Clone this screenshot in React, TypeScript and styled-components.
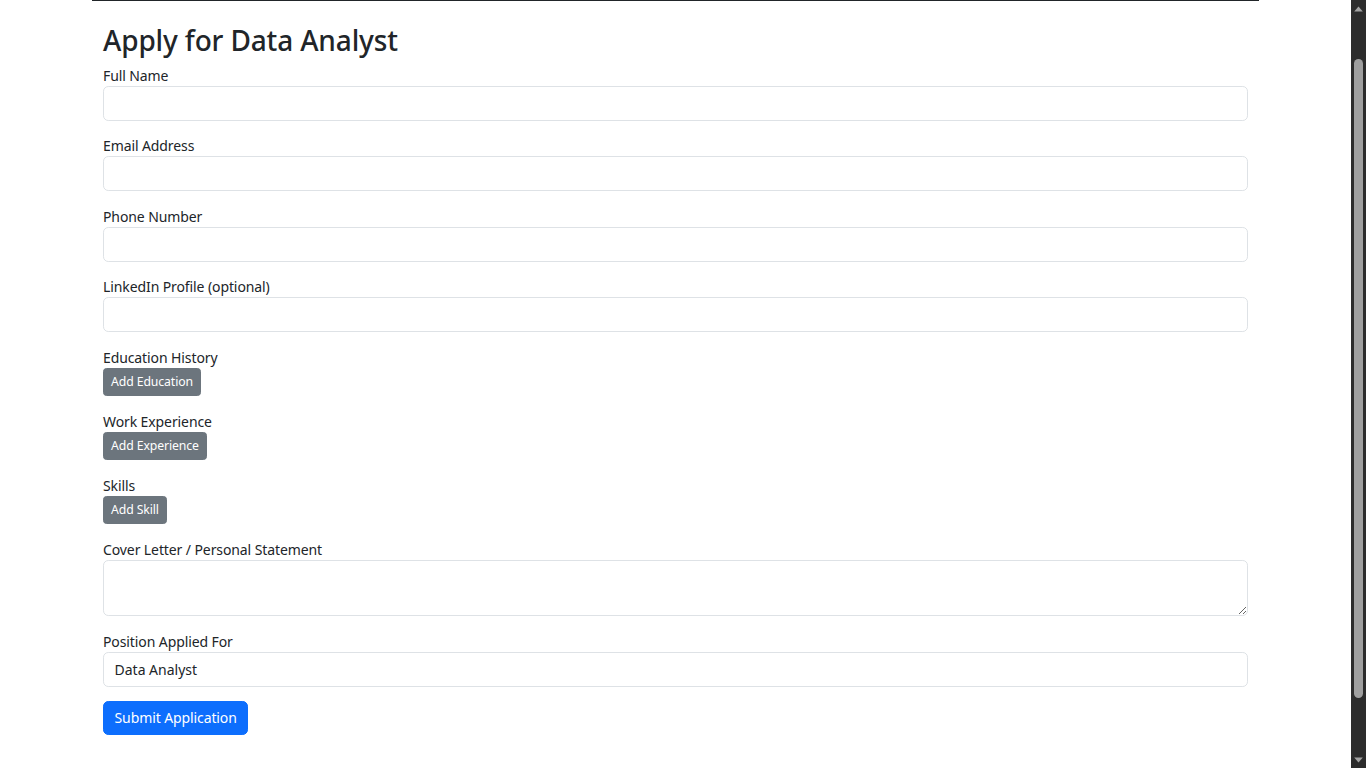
import React, {useState} from 'react';
import styled, {createGlobalStyle} from 'styled-components';

const GlobalStyle = createGlobalStyle`
  html, body {
    margin: 0;
    padding: 0;
    overflow: hidden;
    background: #ffffff;
  }
  body {
    font-family: 'Segoe UI', 'Noto Sans', 'Open Sans', sans-serif;
    font-size: 14px;
    line-height: 1.5;
    color: #212529;
  }
  *, *::before, *::after {
    box-sizing: border-box;
  }
`;

const textFields = [
  {id: 'fullName', label: 'Full Name', type: 'text'},
  {id: 'email', label: 'Email Address', type: 'email'},
  {id: 'phone', label: 'Phone Number', type: 'tel'},
  {id: 'linkedin', label: 'LinkedIn Profile (optional)', type: 'url'},
];

const listFields = [
  {id: 'education', label: 'Education History', button: 'Add Education'},
  {id: 'experience', label: 'Work Experience', button: 'Add Experience'},
  {id: 'skills', label: 'Skills', button: 'Add Skill'},
];

const App = () => {
  const [position, setPosition] = useState('Data Analyst');

  return (
    <>
      <GlobalStyle />
      <StShell>
        <StPage>
          <StContainer>
            <StTitle>Apply for Data Analyst</StTitle>
            <form onSubmit={e => e.preventDefault()}>
              {textFields.map(field => (
                <StField key={field.id} $gap={14.5}>
                  <StLabel htmlFor={field.id}>{field.label}</StLabel>
                  <StInput id={field.id} type={field.type} />
                </StField>
              ))}

              {listFields.map(field => (
                <StField key={field.id} $gap={15}>
                  <StLabel>{field.label}</StLabel>
                  <StSmallButton type="button">{field.button}</StSmallButton>
                </StField>
              ))}

              <StField $gap={15}>
                <StLabel htmlFor="coverLetter">Cover Letter / Personal Statement</StLabel>
                <StTextArea id="coverLetter" rows={2} />
              </StField>

              <StField $gap={14}>
                <StLabel htmlFor="position">Position Applied For</StLabel>
                <StInput id="position" type="text" value={position} onChange={e => setPosition(e.target.value)} />
              </StField>

              <StSubmitButton type="submit">Submit Application</StSubmitButton>
            </form>
          </StContainer>
        </StPage>

        {/* 브라우저 스크롤바 모양 */}
        <StScrollbar>
          <StArrow>
            <svg width="9" height="6" viewBox="0 0 9 6">
              <path d="M4.5 0.5 L8.8 5.5 L0.2 5.5 Z" fill="#a3a3a3" />
            </svg>
          </StArrow>
          <StTrack>
            <StThumb />
          </StTrack>
          <StArrow>
            <svg width="9" height="6" viewBox="0 0 9 6">
              <path d="M0.2 0.5 L8.8 0.5 L4.5 5.5 Z" fill="#a3a3a3" />
            </svg>
          </StArrow>
        </StScrollbar>
      </StShell>
    </>
  );
};

const StShell = styled.div`
  display: flex;
  width: 100vw;
  height: 100vh;
`;
const StPage = styled.main`
  flex: 1;
  overflow: hidden;
`;
const StContainer = styled.div`
  width: 1167px;
  margin: 0 auto;
  padding: 0 11px;
  border-top: 1px solid #212529;
`;
const StTitle = styled.h2`
  margin: 23px 0 7px;
  font-size: 28px;
  font-weight: 500;
  line-height: 1.2;
  letter-spacing: -0.15px;
`;
const StField = styled.div<{$gap: number}>`
  margin-bottom: ${p => p.$gap}px;
`;
const StLabel = styled.label`
  display: block;
  font-size: 14px;
  line-height: 21px;
  letter-spacing: -0.1px;
`;
const StInput = styled.input`
  display: block;
  width: 100%;
  height: 35px;
  padding: 6px 10.5px;
  font-family: inherit;
  font-size: 14px;
  line-height: 21px;
  color: #212529;
  background: #ffffff;
  border: 1px solid #dee2e6;
  border-radius: 5.25px;
  outline: none;
`;
const StTextArea = styled.textarea`
  display: block;
  width: 100%;
  height: 56px;
  padding: 6px 10.5px;
  font-family: inherit;
  font-size: 14px;
  line-height: 21px;
  color: #212529;
  border: 1px solid #dee2e6;
  border-radius: 5.25px;
  resize: vertical;
  outline: none;
`;
const StSmallButton = styled.button`
  display: block;
  height: 28px;
  padding: 0 7px;
  font-family: inherit;
  font-size: 12.25px;
  line-height: 18px;
  letter-spacing: -0.1px;
  color: #ffffff;
  background: #6c757d;
  border: 1px solid #6c757d;
  border-radius: 3.5px;
  cursor: pointer;
`;
const StSubmitButton = styled.button`
  display: block;
  height: 34px;
  margin-top: 1px;
  padding: 0 10.5px;
  font-family: inherit;
  font-size: 14px;
  line-height: 21px;
  letter-spacing: -0.1px;
  color: #ffffff;
  background: #0d6efd;
  border: 1px solid #0d6efd;
  border-radius: 5.25px;
  cursor: pointer;
`;
const StScrollbar = styled.div`
  display: flex;
  flex-direction: column;
  width: 15px;
  height: 100%;
  background: #2c2c2c;
`;
const StArrow = styled.div`
  display: flex;
  align-items: center;
  justify-content: center;
  height: 17px;
`;
const StTrack = styled.div`
  flex: 1;
`;
const StThumb = styled.div`
  width: 9px;
  height: 639px;
  margin: 42px auto 0;
  border-radius: 4.5px;
  background: #9f9f9f;
`;

export default App;
